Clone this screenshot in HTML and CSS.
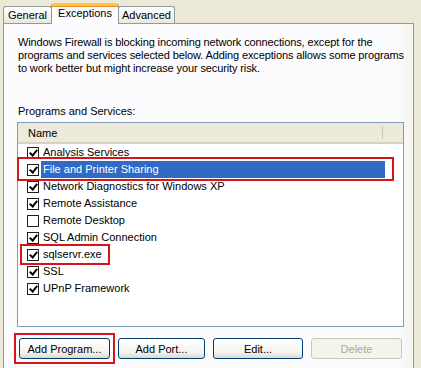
FILE: index.html
```html
<!DOCTYPE html>
<html lang="en">
<head>
    <meta charset="UTF-8">
    <title>Windows Firewall - Exceptions</title>
    <link rel="stylesheet" href="styles.css">
</head>
<body>
    <div class="dialog">
        <div class="tabs">
            <div class="tab tab-general">General</div>
            <div class="tab tab-exceptions active">Exceptions</div>
            <div class="tab tab-advanced">Advanced</div>
        </div>

        <div class="page">
            <p class="intro">Windows Firewall is blocking incoming network connections, except for the<br>programs and services selected below. Adding exceptions allows some programs<br>to work better but might increase your security risk.</p>

            <p class="label">Programs and Services:</p>

            <div class="list">
                <div class="list-head">
                    <span class="col-name">Name</span>
                    <span class="col-rest"></span>
                </div>
                <ul class="rows">
                    <li class="row"><span class="check on"></span><span class="row-text">Analysis Services</span></li>
                    <li class="row selected marked"><span class="check on"></span><span class="row-text">File and Printer Sharing</span></li>
                    <li class="row"><span class="check on"></span><span class="row-text">Network Diagnostics for Windows XP</span></li>
                    <li class="row"><span class="check on"></span><span class="row-text">Remote Assistance</span></li>
                    <li class="row"><span class="check"></span><span class="row-text">Remote Desktop</span></li>
                    <li class="row"><span class="check on"></span><span class="row-text">SQL Admin Connection</span></li>
                    <li class="row marked-short"><span class="check on"></span><span class="row-text">sqlservr.exe</span></li>
                    <li class="row"><span class="check on"></span><span class="row-text">SSL</span></li>
                    <li class="row"><span class="check on"></span><span class="row-text">UPnP Framework</span></li>
                </ul>
            </div>

            <div class="buttons">
                <button class="btn btn-program marked-btn">Add Program...</button>
                <button class="btn btn-port">Add Port...</button>
                <button class="btn btn-edit">Edit...</button>
                <button class="btn btn-delete" disabled>Delete</button>
            </div>
        </div>
    </div>
</body>
</html>
```

FILE: styles.css
```css
html, body {
    margin: 0;
    padding: 0;
}
body {
    width: 421px;
    height: 368px;
    overflow: hidden;
    background: #ece9d8;
    font-family: "Liberation Sans", Arial, sans-serif;
    font-size: 11px;
    color: #000;
}
.dialog {
    padding-left: 3px;
    width: 411px;
}

/* tabs */
.tabs {
    display: flex;
    align-items: flex-end;
    height: 23px;
    position: relative;
    z-index: 1;
}
.tab {
    box-sizing: border-box;
    height: 17px;
    border: 1px solid #919b9c;
    border-bottom: none;
    border-radius: 3px 3px 0 0;
    background: linear-gradient(#ffffff, #f3f2ec 60%, #e9e7df);
    text-align: center;
    line-height: 16px;
}
.tab-general {
    width: 49px;
    margin-right: -1px;
}
.tab-exceptions {
    width: 68px;
}
.tab-advanced {
    width: 57px;
    margin-left: -1px;
}
.tab.active {
    height: 21px;
    margin-bottom: -1px;
    background: #fcfcfe;
    border-top: 3px solid #ffc83c;
    box-shadow: inset 0 1px 0 #e68b2c;
    line-height: 15px;
    position: relative;
    z-index: 2;
}

/* page */
.page {
    box-sizing: border-box;
    height: 360px;
    border: 1px solid #919b9c;
    border-bottom: none;
    background: linear-gradient(to right, #fcfcfe 96%, #f4f3ee);
    padding: 12px 9px 0 13px;
}
.intro {
    margin: 0 0 0 1px;
    line-height: 13px;
    white-space: nowrap;
    letter-spacing: -0.12px;
}
.label {
    margin: 30px 0 4px 1px;
    line-height: 13px;
}

/* list */
.list {
    box-sizing: border-box;
    width: 387px;
    height: 205px;
    border: 1px solid #7f9db9;
    background: #fff;
}
.list-head {
    display: flex;
    height: 19px;
    border-bottom: 2px solid #d6d2c2;
    background: #ebeadb;
}
.col-name {
    width: 365px;
    padding-left: 10px;
    line-height: 21px;
    box-sizing: border-box;
    position: relative;
}
.col-name::after {
    content: "";
    position: absolute;
    right: 0;
    top: 3px;
    bottom: 3px;
    width: 1px;
    background: #c7c5b2;
}
.rows {
    list-style: none;
    margin: 0;
    padding: 0;
}
.row {
    display: flex;
    align-items: center;
    height: 17px;
    position: relative;
}
.check {
    box-sizing: border-box;
    width: 12px;
    height: 12px;
    margin-left: 9px;
    border: 1px solid #1f1f1f;
    background: #fff;
    position: relative;
}
.check.on::after {
    content: "";
    position: absolute;
    left: 3px;
    top: 0px;
    width: 3px;
    height: 6px;
    border-right: 2px solid #000;
    border-bottom: 2px solid #000;
    transform: rotate(40deg);
}
.row-text {
    flex: 1;
    margin-left: 2px;
    margin-right: 18px;
    padding-left: 2px;
    height: 17px;
    line-height: 17px;
}
.row.selected .row-text {
    background: #316ac5;
    color: #fff;
}

/* red highlight marks */
.marked::after {
    content: "";
    position: absolute;
    left: -1px;
    right: 9px;
    top: -4px;
    bottom: -3px;
    border: 2px solid #d7141a;
}
.marked-short::after {
    content: "";
    position: absolute;
    left: 2px;
    width: 90px;
    top: -2px;
    bottom: -2px;
    box-sizing: border-box;
    border: 2px solid #d7141a;
}
.marked-btn {
    position: relative;
    overflow: visible;
}
.marked-btn::after {
    content: "";
    position: absolute;
    left: -6px;
    right: -6px;
    top: -6px;
    bottom: -6px;
    border: 2px solid #d7141a;
}

/* buttons */
.buttons {
    display: flex;
    justify-content: space-between;
    width: 383px;
    margin: 11px 0 0 2px;
}
.btn {
    box-sizing: border-box;
    height: 21px;
    border: 1px solid #003c74;
    border-radius: 3px;
    background: linear-gradient(#ffffff, #f4f3ee 70%, #dcdad0);
    font-family: "Liberation Sans", Arial, sans-serif;
    font-size: 11px;
    color: #000;
    padding: 0;
}
.btn-program { width: 91px; }
.btn-port { width: 87px; }
.btn-edit { width: 90px; }
.btn-delete {
    width: 91px;
    border-color: #c9c7ba;
    background: #f5f4ea;
    color: #aca899;
}
```
